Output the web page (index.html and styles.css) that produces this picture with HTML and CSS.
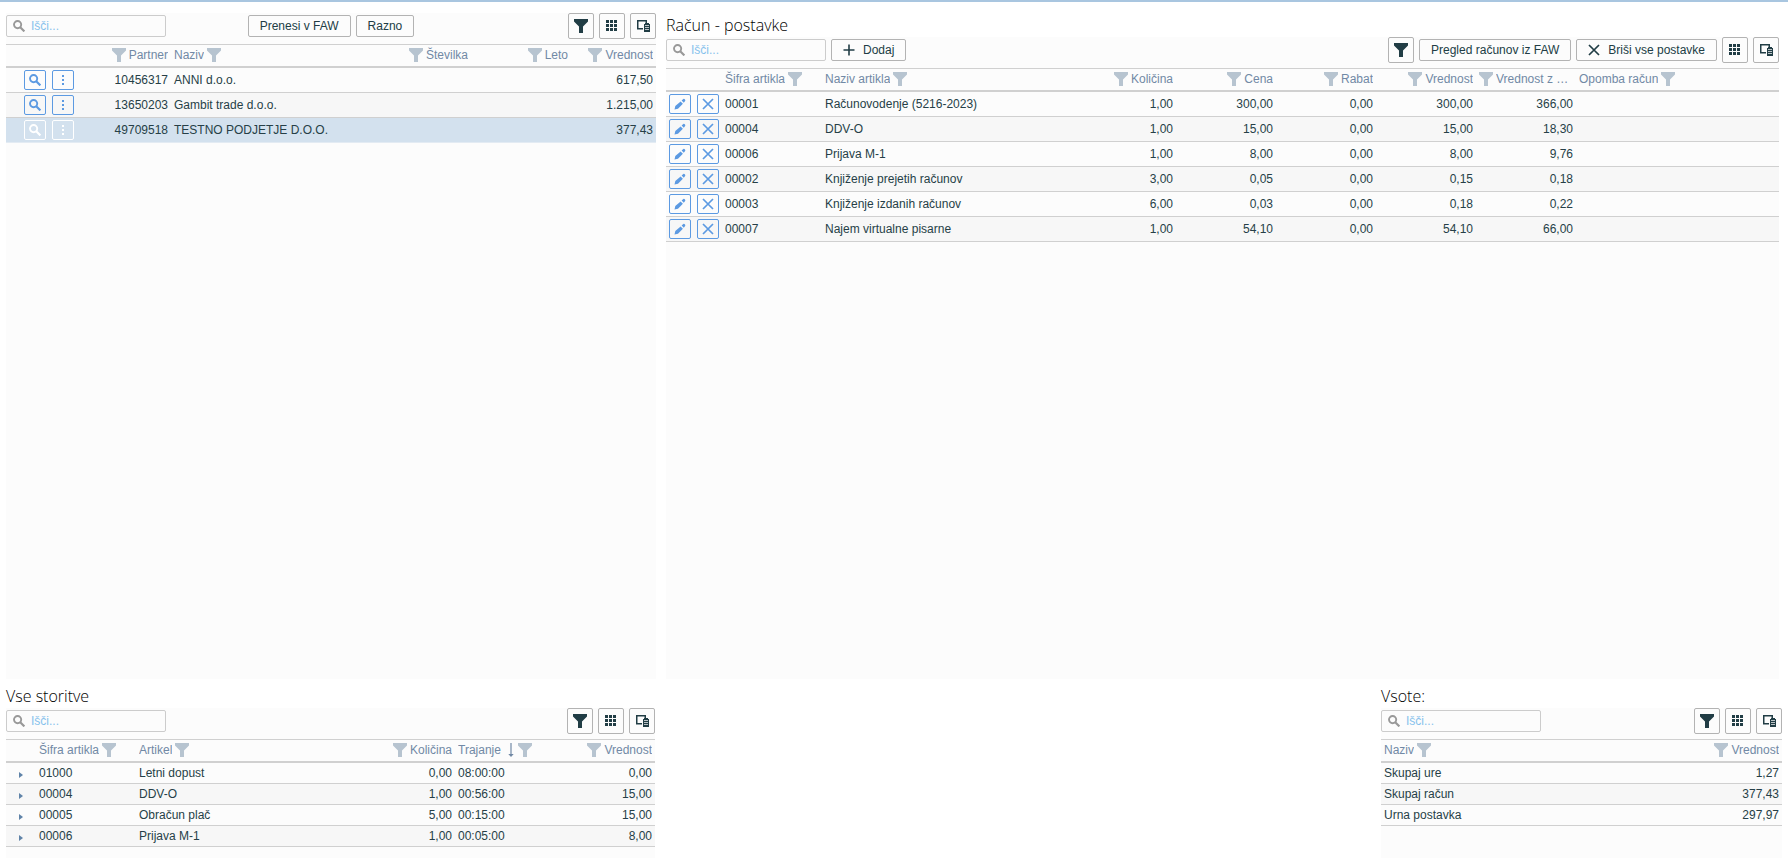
FILE: index.html
```html
<!DOCTYPE html>
<html lang="sl">
<head>
<meta charset="utf-8">
<title>Račun - postavke</title>
<link rel="stylesheet" href="styles.css">
</head>
<body>
<svg class="sprite" aria-hidden="true">
  <symbol id="i-filter" viewBox="0 0 14 14"><path d="M0 0h14v2.500L9 7.500V14H5V7.500L0 2.500z" fill="currentColor"/></symbol>
  <symbol id="i-grid" viewBox="0 0 12 12"><path d="M0 0h3v3H0zM4 0h3v3H4zM8 0h3v3H8zM0 4h3v3H0zM4 4h3v3H4zM8 4h3v3H8zM0 8h3v3H0zM4 8h3v3H4zM8 8h3v3H8z" fill="currentColor"/></symbol>
  <symbol id="i-chooser" viewBox="0 0 13 12"><path d="M6 8.750H.75V.75h8.500V3" fill="none" stroke="currentColor" stroke-width="1.500"/><path d="M7 4h1V3h4v1h1v8H7z" fill="currentColor"/><path d="M8 5.500h4M8 7.500h4M8 9.500h4" stroke="#fcfcfc" stroke-width=".7"/></symbol>
  <symbol id="i-search" viewBox="0 0 12 12"><circle cx="4.600" cy="4.600" r="3.600" fill="none" stroke="currentColor" stroke-width="1.900"/><path d="M7.200 7.200l4.200 4.200" stroke="currentColor" stroke-width="2.200"/></symbol>
  <symbol id="i-dots" viewBox="0 0 12 12"><path d="M5 1h2v2H5zM5 5h2v2H5zM5 9h2v2H5z" fill="currentColor"/></symbol>
  <symbol id="i-pencil" viewBox="0 0 12 12"><path d="M.5 11.500L1.300 8 6.600 3.400l2.300 2.300L4 10.800zM7.600 2.500L9.300 1q.6-.4 1.200.1l.6.600q.5.600 0 1.200L9.800 4.700z" fill="currentColor"/></symbol>
  <symbol id="i-cross" viewBox="0 0 12 12"><path d="M1 1l10 10M11 1L1 11" fill="none" stroke="currentColor" stroke-width="1.700"/></symbol>
  <symbol id="i-plus" viewBox="0 0 12 12"><path d="M6 .5v11M.5 6h11" fill="none" stroke="currentColor" stroke-width="1.600"/></symbol>
  <symbol id="i-sort" viewBox="0 0 6 14"><path d="M3 0v12" stroke="currentColor" stroke-width="1.200"/><path d="M.3 11h5.400L3 14z" fill="currentColor"/></symbol>
  <symbol id="i-expand" viewBox="0 0 4 6"><path d="M0 0l4 3-4 3z" fill="currentColor"/></symbol>
</svg>

<main class="page">
  <div class="upper">
    <section class="pane">
      <div class="grid-panel">
        <div class="toolbar">
          <div class="tools"><label class="search"><svg class="icon"><use href="#i-search"/></svg><input type="text" placeholder="Išči..." aria-label="Išči partnerja"></label></div>
          <div class="tools"><button class="btn">Prenesi v FAW</button><button class="btn">Razno</button></div>
          <div class="tools end">
            <button class="btn square" aria-label="Filter"><svg class="icon filter"><use href="#i-filter"/></svg></button>
            <button class="btn square" aria-label="Mreža"><svg class="icon"><use href="#i-grid"/></svg></button>
            <button class="btn square" aria-label="Izbor stolpcev"><svg class="icon chooser"><use href="#i-chooser"/></svg></button>
          </div>
        </div>
        <table class="data">
          <colgroup><col class="w85"><col class="w80"><col><col class="w100"><col class="w100"><col class="w85"></colgroup>
          <thead><tr>
            <th></th>
            <th><div class="head num"><svg class="icon filter"><use href="#i-filter"/></svg><span>Partner</span></div></th>
            <th><div class="head"><span>Naziv</span><svg class="icon filter"><use href="#i-filter"/></svg></div></th>
            <th><div class="head num"><svg class="icon filter"><use href="#i-filter"/></svg><span>Številka</span></div></th>
            <th><div class="head num"><svg class="icon filter"><use href="#i-filter"/></svg><span>Leto</span></div></th>
            <th><div class="head num"><svg class="icon filter"><use href="#i-filter"/></svg><span>Vrednost</span></div></th>
          </tr></thead>
          <tbody>
            <tr><td><div class="actions"><button class="act" aria-label="Odpri"><svg class="icon"><use href="#i-search"/></svg></button><button class="act" aria-label="Več"><svg class="icon"><use href="#i-dots"/></svg></button></div></td><td class="num">10456317</td><td>ANNI d.o.o.</td><td></td><td></td><td class="num">617,50</td></tr>
            <tr><td><div class="actions"><button class="act" aria-label="Odpri"><svg class="icon"><use href="#i-search"/></svg></button><button class="act" aria-label="Več"><svg class="icon"><use href="#i-dots"/></svg></button></div></td><td class="num">13650203</td><td>Gambit trade d.o.o.</td><td></td><td></td><td class="num">1.215,00</td></tr>
            <tr class="selected"><td><div class="actions"><button class="act" aria-label="Odpri"><svg class="icon"><use href="#i-search"/></svg></button><button class="act" aria-label="Več"><svg class="icon"><use href="#i-dots"/></svg></button></div></td><td class="num">49709518</td><td>TESTNO PODJETJE D.O.O.</td><td></td><td></td><td class="num">377,43</td></tr>
          </tbody>
        </table>
      </div>
    </section>

    <section class="pane">
      <h2 class="title">Račun - postavke</h2>
      <div class="grid-panel">
        <div class="toolbar">
          <div class="tools"><label class="search"><svg class="icon"><use href="#i-search"/></svg><input type="text" placeholder="Išči..." aria-label="Išči postavko"></label><button class="btn"><svg class="icon"><use href="#i-plus"/></svg>Dodaj</button></div>
          <div class="tools"></div>
          <div class="tools end">
            <button class="btn square" aria-label="Filter"><svg class="icon filter"><use href="#i-filter"/></svg></button>
            <button class="btn">Pregled računov iz FAW</button>
            <button class="btn"><svg class="icon"><use href="#i-cross"/></svg>Briši vse postavke</button>
            <button class="btn square" aria-label="Mreža"><svg class="icon"><use href="#i-grid"/></svg></button>
            <button class="btn square" aria-label="Izbor stolpcev"><svg class="icon chooser"><use href="#i-chooser"/></svg></button>
          </div>
        </div>
        <table class="data">
          <colgroup><col class="w56"><col class="w100"><col><col class="w100"><col class="w100"><col class="w100"><col class="w100"><col class="w100"><col class="w203"></colgroup>
          <thead><tr>
            <th></th>
            <th><div class="head"><span>Šifra artikla</span><svg class="icon filter"><use href="#i-filter"/></svg></div></th>
            <th><div class="head"><span>Naziv artikla</span><svg class="icon filter"><use href="#i-filter"/></svg></div></th>
            <th><div class="head num"><svg class="icon filter"><use href="#i-filter"/></svg><span>Količina</span></div></th>
            <th><div class="head num"><svg class="icon filter"><use href="#i-filter"/></svg><span>Cena</span></div></th>
            <th><div class="head num"><svg class="icon filter"><use href="#i-filter"/></svg><span>Rabat</span></div></th>
            <th><div class="head num"><svg class="icon filter"><use href="#i-filter"/></svg><span>Vrednost</span></div></th>
            <th><div class="head num"><svg class="icon filter"><use href="#i-filter"/></svg><span>Vrednost z DDV</span></div></th>
            <th><div class="head"><span>Opomba račun</span><svg class="icon filter"><use href="#i-filter"/></svg></div></th>
          </tr></thead>
          <tbody>
            <tr><td><div class="actions"><button class="act" aria-label="Uredi"><svg class="icon"><use href="#i-pencil"/></svg></button><button class="act" aria-label="Briši"><svg class="icon"><use href="#i-cross"/></svg></button></div></td><td>00001</td><td>Računovodenje (5216-2023)</td><td class="num">1,00</td><td class="num">300,00</td><td class="num">0,00</td><td class="num">300,00</td><td class="num">366,00</td><td></td></tr>
            <tr><td><div class="actions"><button class="act" aria-label="Uredi"><svg class="icon"><use href="#i-pencil"/></svg></button><button class="act" aria-label="Briši"><svg class="icon"><use href="#i-cross"/></svg></button></div></td><td>00004</td><td>DDV-O</td><td class="num">1,00</td><td class="num">15,00</td><td class="num">0,00</td><td class="num">15,00</td><td class="num">18,30</td><td></td></tr>
            <tr><td><div class="actions"><button class="act" aria-label="Uredi"><svg class="icon"><use href="#i-pencil"/></svg></button><button class="act" aria-label="Briši"><svg class="icon"><use href="#i-cross"/></svg></button></div></td><td>00006</td><td>Prijava M-1</td><td class="num">1,00</td><td class="num">8,00</td><td class="num">0,00</td><td class="num">8,00</td><td class="num">9,76</td><td></td></tr>
            <tr><td><div class="actions"><button class="act" aria-label="Uredi"><svg class="icon"><use href="#i-pencil"/></svg></button><button class="act" aria-label="Briši"><svg class="icon"><use href="#i-cross"/></svg></button></div></td><td>00002</td><td>Knjiženje prejetih računov</td><td class="num">3,00</td><td class="num">0,05</td><td class="num">0,00</td><td class="num">0,15</td><td class="num">0,18</td><td></td></tr>
            <tr><td><div class="actions"><button class="act" aria-label="Uredi"><svg class="icon"><use href="#i-pencil"/></svg></button><button class="act" aria-label="Briši"><svg class="icon"><use href="#i-cross"/></svg></button></div></td><td>00003</td><td>Knjiženje izdanih računov</td><td class="num">6,00</td><td class="num">0,03</td><td class="num">0,00</td><td class="num">0,18</td><td class="num">0,22</td><td></td></tr>
            <tr><td><div class="actions"><button class="act" aria-label="Uredi"><svg class="icon"><use href="#i-pencil"/></svg></button><button class="act" aria-label="Briši"><svg class="icon"><use href="#i-cross"/></svg></button></div></td><td>00007</td><td>Najem virtualne pisarne</td><td class="num">1,00</td><td class="num">54,10</td><td class="num">0,00</td><td class="num">54,10</td><td class="num">66,00</td><td></td></tr>
          </tbody>
        </table>
      </div>
    </section>
  </div>

  <div class="lower">
    <section class="pane">
      <h2 class="title">Vse storitve</h2>
      <div class="grid-panel">
        <div class="toolbar">
          <div class="tools"><label class="search"><svg class="icon"><use href="#i-search"/></svg><input type="text" placeholder="Išči..." aria-label="Išči storitev"></label></div>
          <div class="tools"></div>
          <div class="tools end">
            <button class="btn square" aria-label="Filter"><svg class="icon filter"><use href="#i-filter"/></svg></button>
            <button class="btn square" aria-label="Mreža"><svg class="icon"><use href="#i-grid"/></svg></button>
            <button class="btn square" aria-label="Izbor stolpcev"><svg class="icon chooser"><use href="#i-chooser"/></svg></button>
          </div>
        </div>
        <table class="data compact">
          <colgroup><col class="w30"><col class="w100"><col><col class="w100"><col class="w100"><col class="w100"></colgroup>
          <thead><tr>
            <th></th>
            <th><div class="head"><span>Šifra artikla</span><svg class="icon filter"><use href="#i-filter"/></svg></div></th>
            <th><div class="head"><span>Artikel</span><svg class="icon filter"><use href="#i-filter"/></svg></div></th>
            <th><div class="head num"><svg class="icon filter"><use href="#i-filter"/></svg><span>Količina</span></div></th>
            <th><div class="head"><span>Trajanje</span><svg class="icon sort"><use href="#i-sort"/></svg><svg class="icon filter"><use href="#i-filter"/></svg></div></th>
            <th><div class="head num"><svg class="icon filter"><use href="#i-filter"/></svg><span>Vrednost</span></div></th>
          </tr></thead>
          <tbody>
            <tr><td><button class="expand" aria-label="Razširi"><svg class="icon"><use href="#i-expand"/></svg></button></td><td>01000</td><td>Letni dopust</td><td class="num">0,00</td><td>08:00:00</td><td class="num">0,00</td></tr>
            <tr><td><button class="expand" aria-label="Razširi"><svg class="icon"><use href="#i-expand"/></svg></button></td><td>00004</td><td>DDV-O</td><td class="num">1,00</td><td>00:56:00</td><td class="num">15,00</td></tr>
            <tr><td><button class="expand" aria-label="Razširi"><svg class="icon"><use href="#i-expand"/></svg></button></td><td>00005</td><td>Obračun plač</td><td class="num">5,00</td><td>00:15:00</td><td class="num">15,00</td></tr>
            <tr><td><button class="expand" aria-label="Razširi"><svg class="icon"><use href="#i-expand"/></svg></button></td><td>00006</td><td>Prijava M-1</td><td class="num">1,00</td><td>00:05:00</td><td class="num">8,00</td></tr>
          </tbody>
        </table>
      </div>
    </section>

    <section class="pane totals">
      <h2 class="title">Vsote:</h2>
      <div class="grid-panel">
        <div class="toolbar">
          <div class="tools"><label class="search"><svg class="icon"><use href="#i-search"/></svg><input type="text" placeholder="Išči..." aria-label="Išči vsoto"></label></div>
          <div class="tools"></div>
          <div class="tools end">
            <button class="btn square" aria-label="Filter"><svg class="icon filter"><use href="#i-filter"/></svg></button>
            <button class="btn square" aria-label="Mreža"><svg class="icon"><use href="#i-grid"/></svg></button>
            <button class="btn square" aria-label="Izbor stolpcev"><svg class="icon chooser"><use href="#i-chooser"/></svg></button>
          </div>
        </div>
        <table class="data compact">
          <colgroup><col><col></colgroup>
          <thead><tr>
            <th><div class="head"><span>Naziv</span><svg class="icon filter"><use href="#i-filter"/></svg></div></th>
            <th><div class="head num"><svg class="icon filter"><use href="#i-filter"/></svg><span>Vrednost</span></div></th>
          </tr></thead>
          <tbody>
            <tr><td>Skupaj ure</td><td class="num">1,27</td></tr>
            <tr><td>Skupaj račun</td><td class="num">377,43</td></tr>
            <tr><td>Urna postavka</td><td class="num">297,97</td></tr>
          </tbody>
        </table>
      </div>
    </section>
  </div>
</main>
</body>
</html>
```

FILE: styles.css
```css
* { box-sizing: border-box; }

body {
  margin: 0;
  background: #fff;
  color: #263f47;
  font: 12px/16px "Liberation Sans", Arial, sans-serif;
}

.sprite { display: none; }

.page {
  display: flex;
  flex-direction: column;
  height: 100vh;
  border-top: 2px solid #a9c6e0;
  overflow: hidden;
}

.upper {
  flex: 1;
  min-height: 0;
  display: grid;
  grid-template-columns: 650fr 1113fr;
  gap: 10px;
  padding: 11px 9px 0 6px;
}

.lower {
  display: grid;
  grid-template-columns: 649fr 726fr 401fr;
  height: 179px;
  padding: 5px 6px 0;
}

.totals { grid-column: 3; }

.pane {
  display: flex;
  flex-direction: column;
  min-width: 0;
}

.title {
  margin: 0;
  height: 24px;
  font: 300 16px/24px "Open Sans", "Noto Sans", sans-serif;
  color: #000;
}

.grid-panel {
  flex: 1;
  background: #fcfcfc;
}

.toolbar {
  display: grid;
  grid-template-columns: 1fr auto 1fr;
  height: 31px;
  padding-bottom: 5px;
}

.tools {
  display: flex;
  align-items: center;
  gap: 5px;
}

.end { justify-content: flex-end; }

.icon {
  display: block;
  flex: none;
  width: 12px;
  height: 12px;
}

.icon.filter { width: 14px; height: 14px; }
.icon.chooser { width: 13px; }
.icon.sort { width: 6px; height: 14px; margin: 0 1px 0 4px; }

.search {
  display: flex;
  align-items: center;
  gap: 6px;
  width: 160px;
  height: 22px;
  padding: 0 6px;
  border: 1px solid #ccc;
  border-radius: 2px;
  color: #999;
}

.search input {
  width: 100%;
  min-width: 0;
  padding: 0;
  border: 0;
  outline: 0;
  background: none;
  font: inherit;
  color: #263f47;
}

.search input::placeholder { color: #86c2ec; opacity: 1; }

.btn {
  display: flex;
  align-items: center;
  justify-content: center;
  gap: 8px;
  height: 22px;
  padding: 0 11px;
  border: 1px solid #b3b3b3;
  border-radius: 2px;
  background: #fcfcfc;
  color: #213d45;
  font: inherit;
  white-space: nowrap;
}

.btn.square {
  width: 26px;
  height: 26px;
  padding: 0;
}

.data {
  width: 100%;
  table-layout: fixed;
  border-spacing: 0;
  border-top: 1px solid #d0d0d0;
}

.w30 { width: 30px; }
.w56 { width: 56px; }
.w80 { width: 80px; }
.w85 { width: 85px; }
.w100 { width: 100px; }
.w203 { width: 203px; }

.data th {
  height: 23px;
  padding: 0 3px 2px;
  border-bottom: 2px solid #d0d0d0;
  font-weight: 400;
  color: #7189a5;
}

.head {
  display: flex;
  align-items: center;
  gap: 3px;
}

.head .filter { color: #b7c4d0; }

.head span {
  overflow: hidden;
  text-overflow: ellipsis;
  white-space: nowrap;
}

.head.num { justify-content: flex-end; }

.data td {
  height: 25px;
  padding: 0 3px;
  border-bottom: 1px solid #d0d0d0;
  white-space: nowrap;
}

.data.compact td { height: 21px; }

.data td.num { text-align: right; }

.data tbody tr:nth-child(even) { background: #f7f7f7; }

.data tbody tr.selected { background: #d3e1ee; }
.data tbody tr.selected td { border-bottom-color: #e3ebf3; }

.actions {
  display: flex;
  justify-content: center;
  gap: 6px;
}

.act {
  display: flex;
  align-items: center;
  justify-content: center;
  width: 22px;
  height: 20px;
  padding: 0;
  border: 1px solid #5c9ae2;
  border-radius: 2px;
  background: none;
  color: #5c9ae2;
}

.selected .act { border-color: #fff; color: #fff; }

.expand {
  display: flex;
  margin: 4px auto 0;
  padding: 0;
  border: 0;
  background: none;
  color: #5f83a8;
}

.expand .icon { width: 4px; height: 6px; }
```
